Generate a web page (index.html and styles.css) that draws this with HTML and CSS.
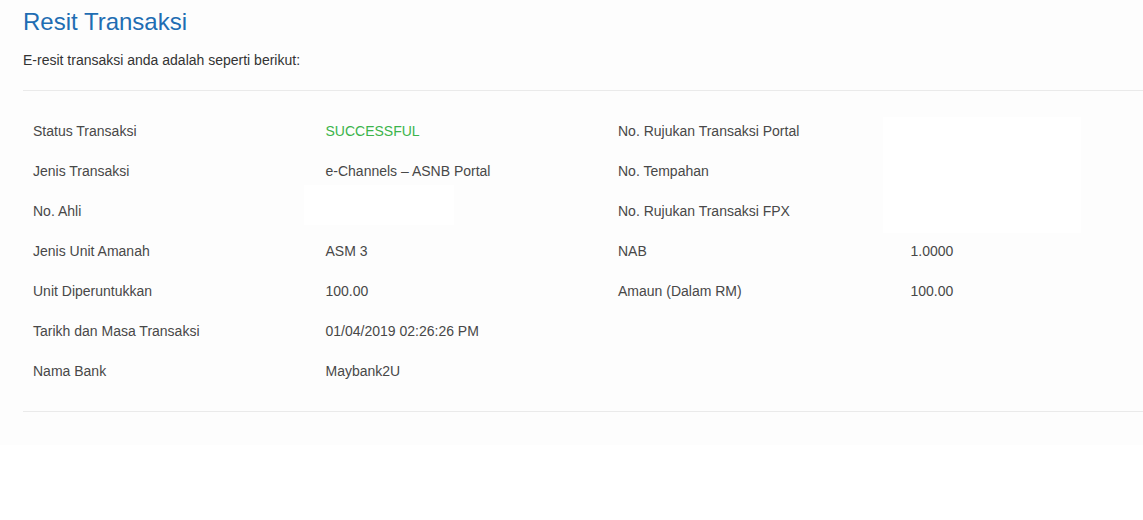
FILE: index.html
```html
<!DOCTYPE html>
<html lang="ms">
<head>
    <meta charset="UTF-8">
    <meta name="viewport" content="width=device-width, initial-scale=1.0">
    <title>Resit Transaksi</title>
    <link rel="stylesheet" href="styles.css">
</head>
<body>
    <div class="page">
        <div class="container">
            <h2 class="title">Resit Transaksi</h2>
            <p class="intro">E-resit transaksi anda adalah seperti berikut:</p>
            <div class="receipt">
                <div class="label">Status Transaksi</div>
                <div class="value success">SUCCESSFUL</div>
                <div class="label">No. Rujukan Transaksi Portal</div>
                <div class="value hidden-block"></div>

                <div class="label">Jenis Transaksi</div>
                <div class="value">e-Channels &ndash; ASNB Portal</div>
                <div class="label">No. Tempahan</div>

                <div class="label">No. Ahli</div>
                <div class="value"><span class="hidden-box"></span></div>
                <div class="label">No. Rujukan Transaksi FPX</div>

                <div class="label">Jenis Unit Amanah</div>
                <div class="value">ASM 3</div>
                <div class="label">NAB</div>
                <div class="value">1.0000</div>

                <div class="label">Unit Diperuntukkan</div>
                <div class="value">100.00</div>
                <div class="label">Amaun (Dalam RM)</div>
                <div class="value">100.00</div>

                <div class="label">Tarikh dan Masa Transaksi</div>
                <div class="value">01/04/2019 02:26:26 PM</div>
                <div class="label"></div>
                <div class="value"></div>

                <div class="label">Nama Bank</div>
                <div class="value">Maybank2U</div>
                <div class="label"></div>
                <div class="value"></div>
            </div>
        </div>
    </div>
</body>
</html>
```

FILE: styles.css
```css
html, body {
    margin: 0;
    padding: 0;
    overflow-x: hidden;
    background: #fff;
}
body {
    font-family: "Liberation Sans", Arial, sans-serif;
    font-size: 14px;
    color: #484848;
}
.page {
    background: #fdfdfd;
    padding-bottom: 33px;
}
.container {
    width: 1170px;
    margin-left: 23px;
}
.title {
    margin: 0;
    padding-top: 8px;
    font-size: 24px;
    font-weight: normal;
    line-height: 28px;
    color: #1f6db3;
}
.intro {
    margin: 14px 0 0;
    line-height: 20px;
    color: #333;
}
.receipt {
    display: grid;
    grid-template-columns: repeat(4, 292.5px);
    grid-auto-rows: 40px;
    margin-top: 20px;
    padding: 20px 0;
    border-top: 1px solid #eaeaea;
    border-bottom: 1px solid #eaeaea;
}
.label, .value {
    padding: 0 10px;
    line-height: 40px;
    white-space: nowrap;
}
.success {
    color: #3cb44b;
}
.hidden-block {
    grid-column: 4;
    grid-row: 1 / span 3;
    margin: 6px 0 -2px -18px;
    width: 198px;
    padding: 0;
    background: #fff;
}
.hidden-box {
    display: block;
    width: 150px;
    height: 40px;
    margin: -6px 0 0 -22px;
    background: #fff;
}
```
